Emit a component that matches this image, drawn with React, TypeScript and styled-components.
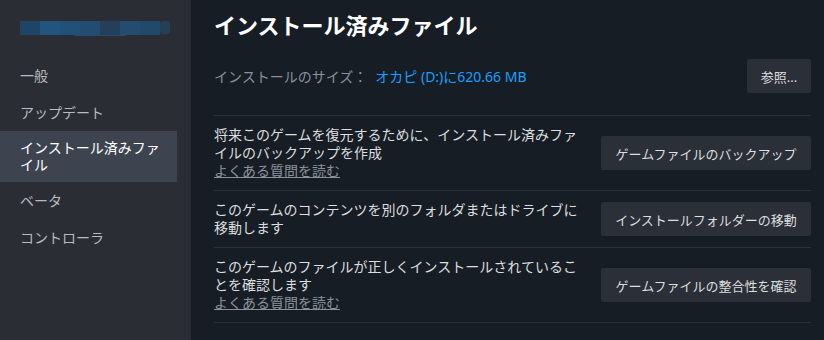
import React from "react";
import styled, { createGlobalStyle } from "styled-components";

const GlobalStyle = createGlobalStyle`
  html, body {
    margin: 0;
    padding: 0;
    background: #171d25;
  }
  body {
    font-family: "Noto Sans", "Noto Sans CJK JP", sans-serif;
  }
`;

const Page = styled.div`
  display: flex;
  width: 824px;
  height: 340px;
  overflow: hidden;
`;

const Sidebar = styled.nav`
  width: 191px;
  flex-shrink: 0;
  background: #2a2d34;
  display: flex;
  flex-direction: column;
`;

const LogoWrap = styled.div`
  padding: 20px 0 0 20px;
  height: 36px;
  margin-bottom: 1px;
`;

const NavItem = styled.div<{ $active?: boolean }>`
  margin-right: 14px;
  padding: ${(p) => (p.$active ? "8px 14px 9px 20px" : "10px 14px 10px 20px")};
  font-size: 14px;
  line-height: 17px;
  color: ${(p) => (p.$active ? "#ffffff" : "#b8bcbf")};
  background: ${(p) => (p.$active ? "#3d4450" : "transparent")};
`;

const Main = styled.main`
  flex: 1;
  padding: 11px 13px 0 23px;
  display: flex;
  flex-direction: column;
`;

const Title = styled.h1`
  margin: 0;
  font-size: 22px;
  line-height: 28px;
  font-weight: 700;
  color: #ffffff;
`;

const SizeRow = styled.div`
  display: flex;
  align-items: center;
  justify-content: space-between;
  margin-top: 20px;
  padding-bottom: 22px;
  border-bottom: 1px solid #2c3038;
`;

const SizeText = styled.div`
  font-size: 14px;
  color: #8b929a;
`;

const SizeValue = styled.span`
  color: #1a9fff;
  margin-left: 8px;
`;

const Button = styled.button<{ $wide?: boolean }>`
  width: ${(p) => (p.$wide ? "210px" : "64px")};
  height: 34px;
  flex-shrink: 0;
  border: none;
  border-radius: 2px;
  background: #2b2f38;
  color: #dcdedf;
  font-family: inherit;
  font-size: 13px;
  padding: 0;
`;

const Row = styled.div`
  display: flex;
  align-items: center;
  justify-content: space-between;
  padding: 10px 0;
  border-bottom: 1px solid #2c3038;
`;

const RowText = styled.div`
  width: 372px;
  font-size: 14px;
  line-height: 18px;
  color: #dcdedf;
`;

const Link = styled.a`
  display: block;
  color: #8b929a;
  text-decoration: underline;
`;

const Logo = () => (
  <svg width="154" height="16" viewBox="0 0 154 16">
    <rect x="0" y="0" width="20" height="14" fill="#1f4566" />
    <rect x="20" y="0" width="20" height="14" fill="#22557d" />
    <rect x="40" y="0" width="20" height="14" fill="#225079" />
    <rect x="60" y="0" width="20" height="14" fill="#234c72" />
    <rect x="55" y="13" width="51" height="2" fill="#234c72" />
    <rect x="80" y="0" width="20" height="14" fill="#263f58" />
    <rect x="100" y="0" width="20" height="14" fill="#244c6e" />
    <rect x="120" y="0" width="20" height="14" fill="#23496a" />
    <rect x="140" y="0" width="10" height="13" rx="3" fill="#263e56" />
  </svg>
);

const rows = [
  {
    text: "将来このゲームを復元するために、インストール済みファイルのバックアップを作成",
    faq: true,
    button: "ゲームファイルのバックアップ",
  },
  {
    text: "このゲームのコンテンツを別のフォルダまたはドライブに移動します",
    faq: false,
    button: "インストールフォルダーの移動",
  },
  {
    text: "このゲームのファイルが正しくインストールされていることを確認します",
    faq: true,
    button: "ゲームファイルの整合性を確認",
  },
];

const App = () => {
  return (
    <Page>
      <GlobalStyle />
      <Sidebar>
        <LogoWrap>
          <Logo />
        </LogoWrap>
        <NavItem>一般</NavItem>
        <NavItem>アップデート</NavItem>
        <NavItem $active>インストール済みファイル</NavItem>
        <NavItem>ベータ</NavItem>
        <NavItem>コントローラ</NavItem>
      </Sidebar>
      <Main>
        <Title>インストール済みファイル</Title>
        <SizeRow>
          <SizeText>
            インストールのサイズ：
            <SizeValue>オカピ (D:)に620.66 MB</SizeValue>
          </SizeText>
          <Button>参照...</Button>
        </SizeRow>
        {rows.map((r) => (
          <Row key={r.button}>
            <RowText>
              {r.text}
              {r.faq && <Link>よくある質問を読む</Link>}
            </RowText>
            <Button $wide>{r.button}</Button>
          </Row>
        ))}
      </Main>
    </Page>
  );
};

export default App;
